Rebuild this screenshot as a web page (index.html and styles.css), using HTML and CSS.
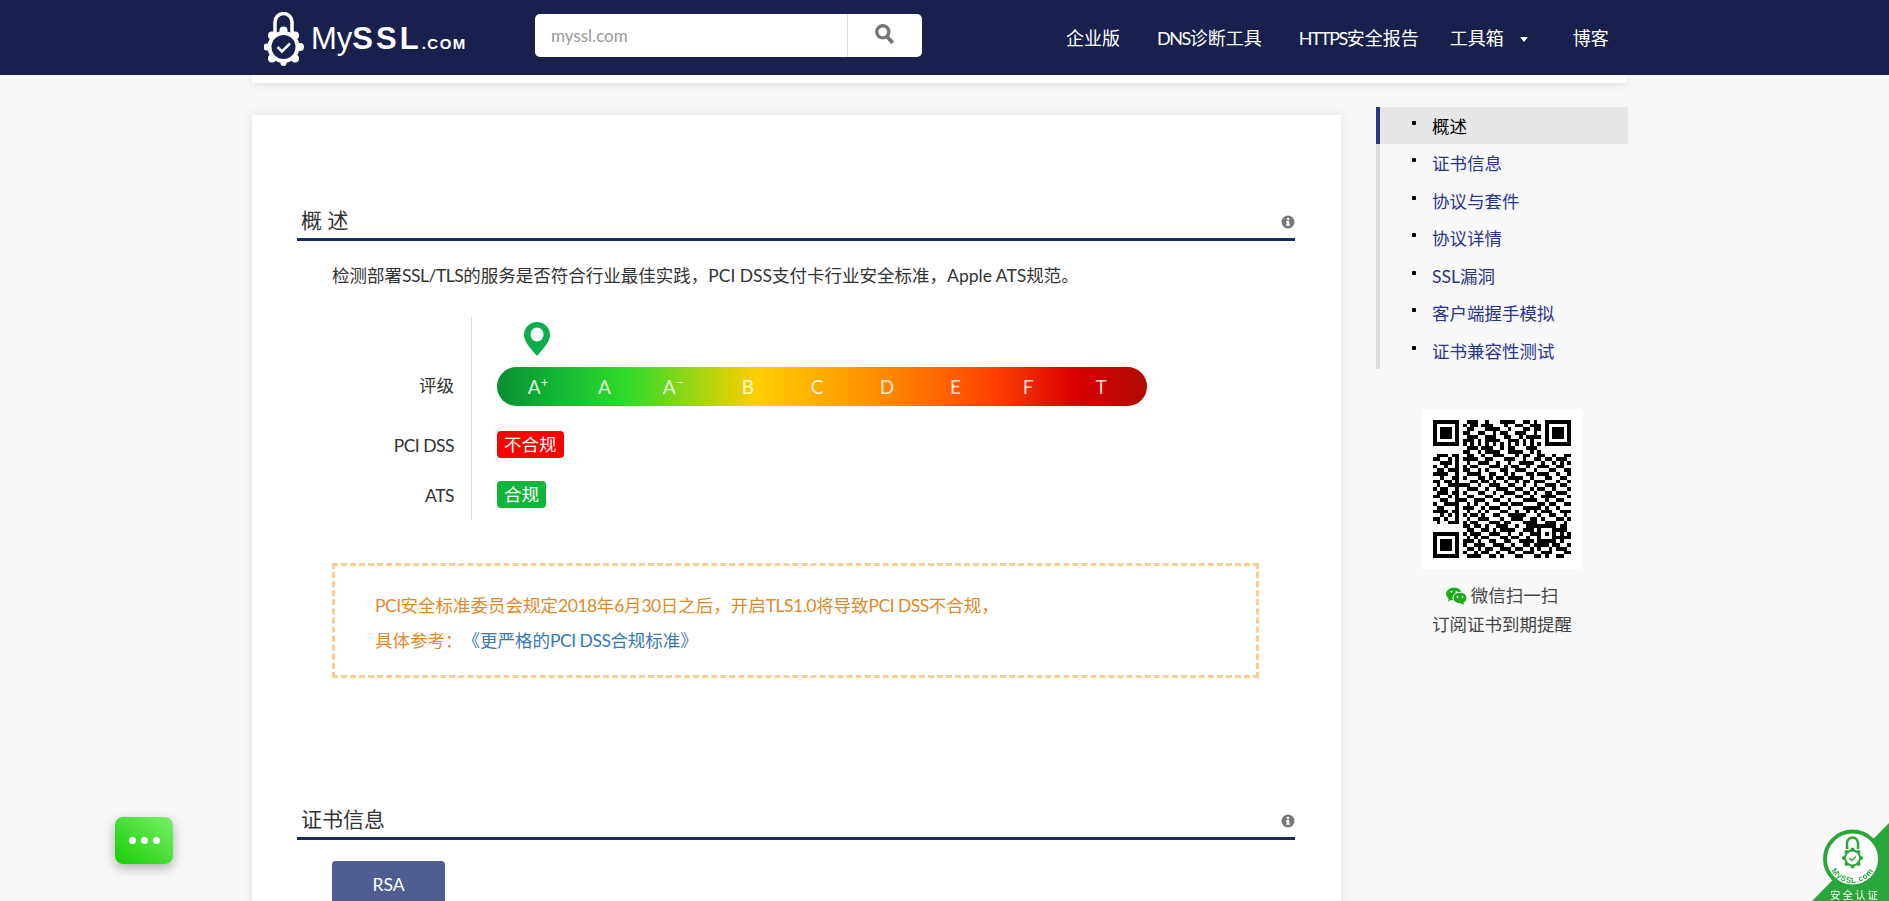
FILE: index.html
```html
<!DOCTYPE html>
<html>
<head>
    <title>MySSL</title>
    <link rel="stylesheet" href="styles.css">
</head>
<body>
    <header class="topbar">
        <a class="logo" href="#">
            <svg class="logo-icon" width="40" height="54" viewBox="0 0 40 54">
                <path d="M11 22V10a8.500 8.500 0 0 1 17 0v12" fill="none" stroke="#fff" stroke-width="3.500"/>
                <g fill="#fff">
                    <circle cx="19.500" cy="35" r="16"/>
                    <circle cx="19.500" cy="18.500" r="4"/>
                    <circle cx="31" cy="23.500" r="4"/>
                    <circle cx="36" cy="35" r="4"/>
                    <circle cx="31" cy="46.500" r="4"/>
                    <circle cx="19.500" cy="51" r="3"/>
                    <circle cx="8" cy="46.500" r="4"/>
                    <circle cx="3" cy="35" r="3.500"/>
                    <circle cx="8" cy="23.500" r="4"/>
                </g>
                <circle cx="19.500" cy="35" r="12" fill="#19204e"/>
                <path d="M13.500 35l4.500 4.500 8-8" fill="none" stroke="#fff" stroke-width="2.500"/>
            </svg>
            <span class="logo-text">My<b>SSL</b><small>.COM</small></span>
        </a>
        <form class="search">
            <input class="search-input" type="text" placeholder="myssl.com">
            <button class="search-btn" type="button">
                <svg width="20" height="18" viewBox="0 0 20 18">
                    <circle cx="8" cy="7" r="5.500" fill="none" stroke="#777" stroke-width="3"/>
                    <path d="M11.500 11l5.500 6" stroke="#777" stroke-width="3.500"/>
                </svg>
            </button>
        </form>
        <nav class="topnav">
            <a href="#">企业版</a>
            <a href="#"><span class="tight">DNS</span>诊断工具</a>
            <a href="#"><span class="tight">HTTPS</span>安全报告</a>
            <a class="tools" href="#">工具箱<span class="caret"></span></a>
            <a href="#">博客</a>
        </nav>
    </header>

    <div class="page">
        <div class="strip"></div>
        <div class="columns">
            <main class="card">
                <h2 class="section-title">
                    <span>概 述</span>
                    <svg class="info" width="14" height="14" viewBox="0 0 14 14">
                        <circle cx="7" cy="7" r="6.500" fill="#777"/>
                        <rect x="5.800" y="2.800" width="2.400" height="2.200" fill="#fff"/>
                        <path d="M5 6h3.200v3.400H9v1.400H5V9.400h.8V7.400H5z" fill="#fff"/>
                    </svg>
                </h2>
                <p class="intro">检测部署<span class="narrow">SSL/TLS</span>的服务是否符合行业最佳实践，PCI DSS支付卡行业安全标准，Apple ATS规范。</p>

                <div class="rating">
                    <div class="row row-pin">
                        <div class="row-label"></div>
                        <div class="row-value">
                            <svg class="pin" width="26" height="34" viewBox="0 0 26 34">
                                <path d="M13 0C5.800 0 0 5.800 0 13c0 7 8 15 13 21 5-6 13-14 13-21C26 5.800 20.200 0 13 0z" fill="#0cad4a"/>
                                <ellipse cx="13" cy="12.500" rx="6.500" ry="7" fill="#fff"/>
                            </svg>
                        </div>
                    </div>
                    <div class="row row-bar">
                        <div class="row-label">评级</div>
                        <div class="row-value">
                            <div class="grades">
                                <span>A<sup>+</sup></span>
                                <span>A</span>
                                <span>A<sup>−</sup></span>
                                <span>B</span>
                                <span>C</span>
                                <span>D</span>
                                <span>E</span>
                                <span>F</span>
                                <span>T</span>
                            </div>
                        </div>
                    </div>
                    <div class="row row-pci">
                        <div class="row-label narrow">PCI DSS</div>
                        <div class="row-value"><span class="tag tag-red">不合规</span></div>
                    </div>
                    <div class="row row-ats">
                        <div class="row-label narrow">ATS</div>
                        <div class="row-value"><span class="tag tag-green">合规</span></div>
                    </div>
                </div>

                <div class="notice">
                    <p><span class="narrow">PCI</span>安全标准委员会规定<span class="narrow">2018</span>年<span class="narrow">6</span>月<span class="narrow">30</span>日之后，开启<span class="narrow">TLS1.0</span>将导致<span class="narrow">PCI DSS</span>不合规，</p>
                    <p>具体参考：<a href="#">《更严格的<span class="narrow">PCI DSS</span>合规标准》</a></p>
                </div>

                <h2 class="section-title second">
                    <span>证书信息</span>
                    <svg class="info" width="14" height="14" viewBox="0 0 14 14">
                        <circle cx="7" cy="7" r="6.500" fill="#777"/>
                        <rect x="5.800" y="2.800" width="2.400" height="2.200" fill="#fff"/>
                        <path d="M5 6h3.200v3.400H9v1.400H5V9.400h.8V7.400H5z" fill="#fff"/>
                    </svg>
                </h2>
                <button class="cert-tab" type="button">RSA</button>
            </main>

            <aside class="side">
                <ul class="sidenav">
                    <li class="active"><a href="#">概述</a></li>
                    <li><a href="#">证书信息</a></li>
                    <li><a href="#">协议与套件</a></li>
                    <li><a href="#">协议详情</a></li>
                    <li><a href="#">SSL漏洞</a></li>
                    <li><a href="#">客户端握手模拟</a></li>
                    <li><a href="#">证书兼容性测试</a></li>
                </ul>
                <div class="qr">
                    <svg width="138" height="138" viewBox="0 0 37 37" shape-rendering="crispEdges">
                        <path fill="#000" fill-rule="evenodd" d="M0 0h7v7H0zM1 1v5h5V1zM2 2h3v3H2zM30 0h7v7h-7zM31 1v5h5V1zM32 2h3v3h-3zM0 30h7v7H0zM1 31v5h5v-5zM2 32h3v3H2zM28 28h5v5h-5zM29 29v3h3v-3zM30 30h1v1h-1z"/>
                        <path fill="none" stroke="#000" d="M9 .5h3M14 .5h1M18 .5h4M24 .5h2M27 .5h1M8 1.500h1M10 1.500h2M13 1.500h3M19 1.500h1M22 1.500h2M26 1.500h3M9 2.500h2M14 2.500h4M20 2.500h1M24 2.500h2M27 2.500h2M8 3.500h2M12 3.500h2M16 3.500h1M18 3.500h2M22 3.500h3M27 3.500h1M9 4.500h3M14 4.500h3M19 4.500h2M23 4.500h1M25 4.500h4M8 5.500h3M12 5.500h1M14 5.500h4M20 5.500h3M24 5.500h1M26 5.500h1M8 6.500h1M10 6.500h1M12 6.500h1M14 6.500h1M16 6.500h1M18 6.500h1M20 6.500h1M22 6.500h1M24 6.500h1M26 6.500h1M28 6.500h1M9 7.500h3M13 7.500h3M18 7.500h1M20 7.500h2M25 7.500h3M8 8.500h2M12 8.500h1M14 8.500h4M20 8.500h4M26 8.500h1M28 8.500h1M1 9.500h3M5 9.500h2M9 9.500h2M13 9.500h1M16 9.500h3M22 9.500h1M24 9.500h2M28 9.500h2M32 9.500h1M35 9.500h2M0 10.500h2M4 10.500h1M6 10.500h1M8 10.500h4M14 10.500h2M19 10.500h3M24 10.500h1M27 10.500h2M30 10.500h2M33 10.500h3M2 11.500h3M6 11.500h1M9 11.500h1M12 11.500h3M17 11.500h1M20 11.500h1M23 11.500h4M29 11.500h1M32 11.500h1M34 11.500h1M36 11.500h1M0 12.500h1M3 12.500h1M6 12.500h1M8 12.500h1M10 12.500h2M15 12.500h3M19 12.500h1M21 12.500h2M25 12.500h1M28 12.500h3M33 12.500h2M1 13.500h2M4 13.500h3M8 13.500h2M12 13.500h1M14 13.500h1M18 13.500h2M22 13.500h3M27 13.500h1M31 13.500h2M35 13.500h2M0 14.500h4M6 14.500h1M9 14.500h4M15 14.500h2M19 14.500h1M21 14.500h1M25 14.500h2M28 14.500h3M33 14.500h1M36 14.500h1M2 15.500h1M5 15.500h2M8 15.500h1M12 15.500h2M15 15.500h1M17 15.500h2M20 15.500h4M26 15.500h1M30 15.500h2M34 15.500h2M0 16.500h2M3 16.500h2M6 16.500h1M10 16.500h2M13 16.500h2M16 16.500h1M19 16.500h1M22 16.500h1M24 16.500h2M27 16.500h3M33 16.500h1M36 16.500h1M1 17.500h1M4 17.500h6M12 17.500h1M15 17.500h3M20 17.500h2M24 17.500h1M27 17.500h1M30 17.500h3M34 17.500h2M0 18.500h1M2 18.500h2M6 18.500h1M9 18.500h3M14 18.500h1M17 18.500h3M22 18.500h2M26 18.500h1M28 18.500h2M32 18.500h1M36 18.500h1M1 19.500h3M5 19.500h2M8 19.500h1M12 19.500h2M16 19.500h1M19 19.500h3M24 19.500h2M27 19.500h1M30 19.500h2M33 19.500h3M0 20.500h2M4 20.500h1M6 20.500h1M9 20.500h2M14 20.500h2M18 20.500h1M22 20.500h2M26 20.500h1M29 20.500h4M36 20.500h1M2 21.500h2M6 21.500h3M11 21.500h3M16 21.500h2M20 21.500h1M24 21.500h4M30 21.500h1M33 21.500h2M0 22.500h1M3 22.500h4M9 22.500h1M11 22.500h1M14 22.500h1M18 22.500h2M21 22.500h3M28 22.500h2M31 22.500h2M35 22.500h2M1 23.500h2M6 23.500h1M8 23.500h3M13 23.500h1M15 23.500h3M20 23.500h1M24 23.500h5M30 23.500h1M33 23.500h1M0 24.500h4M5 24.500h2M9 24.500h1M12 24.500h1M14 24.500h1M18 24.500h2M22 24.500h1M25 24.500h1M27 24.500h1M29 24.500h3M34 24.500h3M2 25.500h1M4 25.500h1M6 25.500h1M8 25.500h1M10 25.500h2M13 25.500h1M16 25.500h2M20 25.500h5M28 25.500h1M31 25.500h2M35 25.500h1M0 26.500h2M3 26.500h1M6 26.500h1M9 26.500h1M12 26.500h3M18 26.500h1M21 26.500h3M26 26.500h2M29 26.500h1M33 26.500h2M36 26.500h1M1 27.500h1M4 27.500h3M8 27.500h1M10 27.500h2M15 27.500h3M19 27.500h2M24 27.500h4M30 27.500h3M35 27.500h1M8 28.500h2M11 28.500h2M14 28.500h1M17 28.500h3M22 28.500h1M25 28.500h3M34 28.500h2M9 29.500h2M13 29.500h2M16 29.500h1M18 29.500h4M24 29.500h3M33 29.500h3M8 30.500h1M10 30.500h3M15 30.500h3M20 30.500h1M23 30.500h1M26 30.500h2M34 30.500h1M36 30.500h1M9 31.500h1M11 31.500h1M13 31.500h2M18 31.500h2M21 31.500h2M25 31.500h1M33 31.500h4M8 32.500h3M12 32.500h1M15 32.500h2M19 32.500h2M23 32.500h4M34 32.500h1M8 33.500h1M11 33.500h3M16 33.500h3M21 33.500h1M24 33.500h2M27 33.500h4M32 33.500h2M36 33.500h1M9 34.500h2M12 34.500h1M14 34.500h2M18 34.500h3M22 34.500h2M26 34.500h1M28 34.500h1M31 34.500h1M33 34.500h3M8 35.500h1M11 35.500h1M13 35.500h2M17 35.500h1M20 35.500h2M24 35.500h3M29 35.500h3M35 35.500h2M9 36.500h4M15 36.500h2M18 36.500h1M22 36.500h2M27 36.500h2M30 36.500h1M33 36.500h2"/>
                    </svg>
                </div>
                <div class="qr-caption">
                    <p>
                        <svg class="wechat" width="21" height="18" viewBox="0 0 21 18">
                            <ellipse cx="8" cy="7" rx="8" ry="6.500" fill="#1aad19"/>
                            <path d="M3 11l-.8 3.500L7 12z" fill="#1aad19"/>
                            <ellipse cx="14" cy="11" rx="7" ry="5.800" fill="#1aad19" stroke="#f8f8f8"/>
                            <path d="M17 15l1.500 3-4.500-2z" fill="#1aad19"/>
                            <circle cx="5.500" cy="5" r="1.100" fill="#fff"/>
                            <circle cx="10.500" cy="5" r="1.100" fill="#fff"/>
                            <circle cx="11.500" cy="10" r=".9" fill="#fff"/>
                            <circle cx="16.500" cy="10" r=".9" fill="#fff"/>
                        </svg>微信扫一扫
                    </p>
                    <p>订阅证书到期提醒</p>
                </div>
            </aside>
        </div>
    </div>

    <button class="chat-btn" type="button"><i></i><i></i><i></i></button>

    <svg class="seal" width="80" height="81" viewBox="0 0 80 81">
        <polygon points="3,81 80,3 80,81" fill="#2aa63a"/>
        <circle cx="43.500" cy="39" r="27.500" fill="#fff" stroke="#2aa63a" stroke-width="4"/>
        <path d="M38 29v-6a5.500 5.500 0 0 1 11 0v6" fill="none" stroke="#2aa63a" stroke-width="2.500"/>
        <g fill="#2aa63a">
            <circle cx="43.500" cy="38" r="8.500"/>
            <circle cx="43.500" cy="29.500" r="2"/>
            <circle cx="49.500" cy="32" r="2"/>
            <circle cx="52" cy="38" r="2"/>
            <circle cx="49.500" cy="44" r="2"/>
            <circle cx="43.500" cy="46.500" r="2"/>
            <circle cx="37.500" cy="44" r="2"/>
            <circle cx="35" cy="38" r="2"/>
            <circle cx="37.500" cy="32" r="2"/>
        </g>
        <circle cx="43.500" cy="38" r="6.500" fill="#fff"/>
        <path d="M40.300 38l2.500 2.500 4-4" fill="none" stroke="#2aa63a" stroke-width="1.500"/>
        <path id="sealArc" d="M19.500 39a24 24 0 0 0 48 0" fill="none"/>
        <text class="seal-arc"><textPath href="#sealArc" startOffset="50%" text-anchor="middle">MySSL.com</textPath></text>
        <text class="seal-label" x="46" y="79" text-anchor="middle">安全认证</text>
    </svg>
</body>
</html>
```

FILE: styles.css
```css
html, body {
    height: 100%;
    overflow: hidden;
}

body {
    margin: 0;
    background-color: #f8f8f8;
    font-family: Lato, "Noto Sans CJK SC", sans-serif;
    font-size: 17.5px;
    color: #333;
    text-spacing-trim: space-all;
}

a {
    text-decoration: none;
}

p {
    margin: 0;
}

.narrow {
    letter-spacing: -0.5px;
}

/* header */
.topbar {
    display: flex;
    align-items: center;
    height: 75px;
    padding-left: 264px;
    background-color: #19204e;
}

.logo {
    display: flex;
    align-items: center;
    width: 271px;
    color: #fff;
}

.logo-icon {
    margin-top: 3px;
}

.logo-text {
    margin: 7px 0 0 7px;
    font-family: "Liberation Sans", sans-serif;
    font-size: 31px;
    line-height: 34px;
}

.logo-text b {
    letter-spacing: 3px;
}

.logo-text small {
    font-size: 15px;
    font-weight: bold;
    letter-spacing: 1.500px;
}

.search {
    display: flex;
    width: 387px;
    height: 43px;
    margin: -4px 144px 0 0;
    background-color: #fff;
    border-radius: 5px;
}

.search-input {
    flex: 1;
    min-width: 0;
    padding: 0 16px;
    border: none;
    border-right: 1px solid #ddd;
    background: none;
    font-family: inherit;
    font-size: 17px;
    outline: none;
}

.search-input::placeholder {
    color: #999;
}

.search-btn {
    width: 74px;
    padding: 0;
    border: none;
    background: none;
}

.search-btn svg {
    width: 22px;
    height: 20px;
}

.topnav {
    display: flex;
    align-items: center;
    gap: 37px;
    margin-top: -2px;
    font-size: 18px;
}

.topnav a {
    color: #fff;
}

.tight {
    letter-spacing: -1.500px;
}

.topnav .tools {
    margin-left: -6px;
    margin-right: 8px;
}

.caret {
    display: inline-block;
    margin-left: 16px;
    vertical-align: 3px;
    border-top: 5px solid #fff;
    border-left: 4.500px solid transparent;
    border-right: 4.500px solid transparent;
}

/* page */
.page {
    width: 1376px;
    margin-left: 252px;
}

.strip {
    width: 1375px;
    height: 8px;
    background-color: #fff;
    box-shadow: 0 2px 6px rgba(0, 0, 0, 0.1);
}

.columns {
    display: flex;
    align-items: flex-start;
}

.card {
    width: 1089px;
    min-height: 900px;
    box-sizing: border-box;
    margin-top: 32px;
    padding: 87px 46px 0 45px;
    background-color: #fff;
    box-shadow: 0 0 10px rgba(0, 0, 0, 0.1);
}

.section-title {
    display: flex;
    justify-content: space-between;
    align-items: center;
    height: 36px;
    margin: 0;
    padding-left: 4px;
    border-bottom: 3px solid #1a2c5f;
    font-size: 21px;
    font-weight: normal;
    line-height: 36px;
}

.section-title .info {
    margin-top: 3px;
}

.section-title.second {
    margin-top: 123px;
}

.intro {
    margin: 21px 0 0 35px;
    line-height: 28px;
}

/* rating */
.rating {
    margin: 27px 0 0 35px;
}

.row {
    display: flex;
}

.row-label {
    width: 122px;
    padding-right: 17px;
    border-right: 1px solid #ddd;
    text-align: right;
    line-height: 29px;
}

.row-value {
    padding-left: 25px;
}

.row-pin > div {
    height: 50px;
}

.pin {
    display: block;
    margin: 5px 0 0 27px;
}

.row-bar .row-label {
    line-height: 38px;
}

.grades {
    display: grid;
    grid-template-columns: 66px 67px 70px 80px 58px 82px 55px 90px 56px;
    width: 650px;
    height: 39px;
    box-sizing: border-box;
    padding-left: 8px;
    border-radius: 20px;
    background: linear-gradient(to right, #098d31 0%, #14bb35 10%, #2edc2a 20%, #ffcf00 40%, #ff8800 60%, #ff4400 76%, #d80000 89%, #b00a00 100%);
    color: rgba(255, 255, 255, 0.85);
    font-size: 19px;
    line-height: 39px;
    text-align: center;
}

.grades sup {
    font-size: 13px;
    line-height: 0;
}

.row-pci > div {
    padding-top: 25px;
    padding-bottom: 12px;
}

.row-ats > div {
    padding-top: 11px;
    padding-bottom: 12px;
}

.row-pci > .row-label,
.row-ats > .row-label {
    padding-bottom: 10px;
}

.tag {
    display: block;
    height: 27px;
    padding: 0 7px;
    border-radius: 4px;
    color: #fff;
    line-height: 27px;
}

.tag-red {
    background-color: #ff0000;
}

.tag-green {
    background-color: #11b53a;
}

/* notice */
.notice {
    width: 927px;
    height: 115px;
    box-sizing: border-box;
    margin: 43px 0 0 35px;
    padding: 22px 0 0 40px;
    border: 3px dashed #f8cf93;
    color: #df8a28;
    line-height: 35px;
}

.notice a {
    color: #337ab7;
}

.cert-tab {
    display: block;
    width: 113px;
    height: 60px;
    margin: 21px 0 0 35px;
    padding: 0 0 14px;
    border: none;
    border-radius: 4px 4px 0 0;
    background-color: #4f5d93;
    color: #fff;
    font-family: inherit;
    font-size: 17.5px;
}

/* right column */
.side {
    width: 252px;
    margin: 24px 0 0 35px;
}

.sidenav {
    margin: 0;
    padding: 0;
    border-left: 4px solid #ddd;
    list-style: none;
}

.sidenav li {
    height: 37.430px;
    line-height: 40px;
}

.sidenav a {
    color: #2b3488;
}

.sidenav li::before {
    content: "";
    display: inline-block;
    width: 4px;
    height: 4px;
    margin: 0 16px 0 32px;
    border-radius: 1px;
    background-color: #000;
    vertical-align: 8px;
}

.sidenav .active {
    margin-left: -4px;
    border-left: 4px solid #2b3488;
    background-color: #e7e7e7;
}

.sidenav .active a {
    color: #000;
}

.qr {
    width: 160px;
    height: 160px;
    box-sizing: border-box;
    margin: 40px 0 0 46px;
    padding: 11px;
    background-color: #fff;
}

.qr svg {
    display: block;
}

.qr-caption {
    width: 160px;
    margin: 12px 0 0 46px;
    line-height: 29px;
    text-align: center;
    color: #444;
}

.wechat {
    margin-right: 4px;
    vertical-align: -3px;
}

/* floating things */
.chat-btn {
    position: fixed;
    left: 115px;
    top: 817px;
    display: flex;
    justify-content: center;
    align-items: center;
    gap: 5px;
    width: 58px;
    height: 47px;
    padding: 0;
    border: none;
    border-radius: 8px;
    background: linear-gradient(to top right, #16cc05, #7bef6a);
    box-shadow: 0 4px 12px rgba(0, 0, 0, 0.3);
}

.chat-btn i {
    width: 7px;
    height: 7px;
    border-radius: 50%;
    background-color: #fff;
}

.seal {
    position: fixed;
    right: 0;
    bottom: 0;
}

.seal-arc {
    font-family: "Liberation Sans", sans-serif;
    font-size: 8px;
    font-weight: bold;
    letter-spacing: .6px;
    fill: #2aa63a;
}

.seal-label {
    font-family: "Noto Sans CJK SC", sans-serif;
    font-size: 10.500px;
    letter-spacing: 2px;
    fill: #fff;
}
```
